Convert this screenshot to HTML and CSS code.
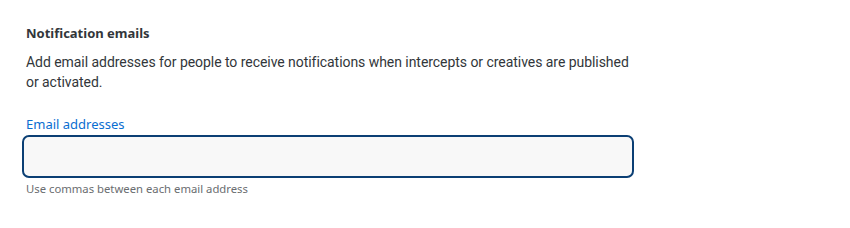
FILE: index.html
```html
<!DOCTYPE html>
<html lang="en">
<head>
<meta charset="utf-8">
<title>Notification emails</title>
<link rel="stylesheet" href="styles.css">
</head>
<body>
<section class="panel">
  <h2 class="title">Notification emails</h2>
  <p class="desc">Add email addresses for people to receive notifications when intercepts or creatives are published or activated.</p>
  <div class="field">
    <label class="label" for="emails">Email addresses</label>
    <input class="input" id="emails" type="text">
    <div class="help">Use commas between each email address</div>
  </div>
</section>
</body>
</html>
```
FILE: styles.css
```css
html, body {
  margin: 0;
  padding: 0;
  background: #ffffff;
}
body {
  font-family: "Noto Sans", "Open Sans", sans-serif;
  color: #32363a;
}
.panel {
  padding: 24px 0 0 26px;
  width: 612px;
}
.title {
  margin: 0;
  font-size: 13px;
  font-weight: 700;
  line-height: 18px;
  color: #32363a;
}
.desc {
  margin: 10px 0 0 0;
  font-family: Roboto, "Noto Sans", sans-serif;
  font-size: 14px;
  letter-spacing: -0.05px;
  line-height: 20px;
  color: #32363a;
}
.field {
  margin-top: 23px;
  display: flex;
  flex-direction: column;
}
.label {
  font-size: 13px;
  line-height: 18px;
  color: #0a6ed1;
}
.input {
  margin: 2px 0 0 -4px;
  box-sizing: border-box;
  width: 612px;
  height: 43px;
  border: 2px solid #0b3f74;
  border-radius: 7px;
  background: #f8f8f8;
  outline: none;
}
.help {
  margin-top: 3px;
  font-size: 11.3px;
  line-height: 16px;
  color: #6a6d70;
}
```
